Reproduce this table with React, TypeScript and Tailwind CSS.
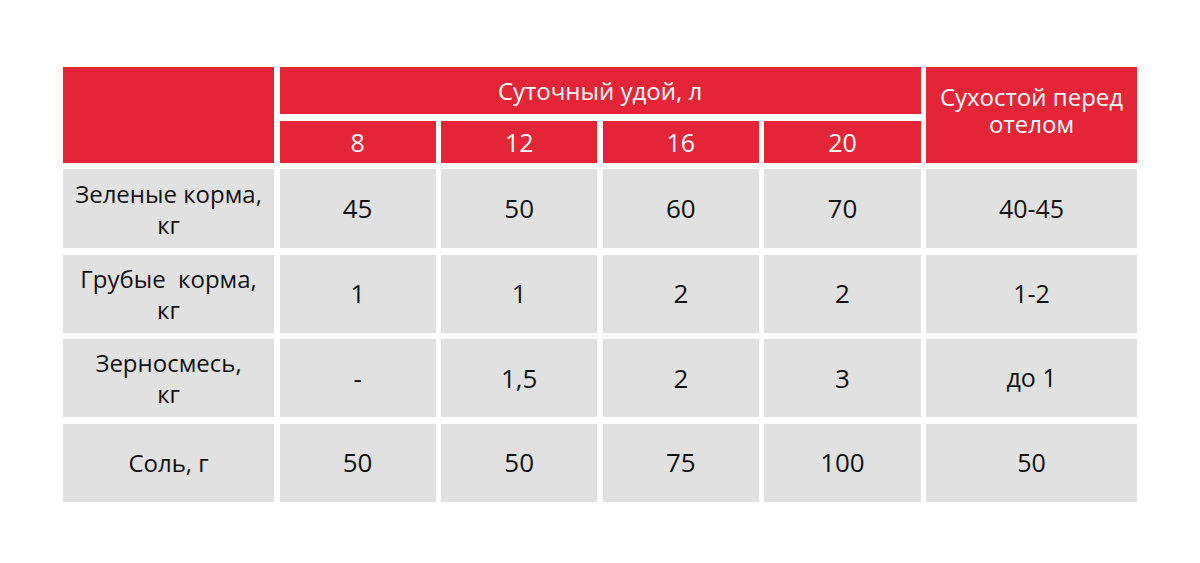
import React from "react";

const cols = ["8", "12", "16", "20"];

const rows: { label: React.ReactNode; values: string[]; dry: string }[] = [
  { label: <>Зеленые корма,<br />кг</>, values: ["45", "50", "60", "70"], dry: "40-45" },
  { label: <>Грубые&nbsp; корма,<br />кг</>, values: ["1", "1", "2", "2"], dry: "1-2" },
  { label: <>Зерносмесь,<br />кг</>, values: ["-", "1,5", "2", "3"], dry: "до 1" },
  { label: <>Соль, г</>, values: ["50", "50", "75", "100"], dry: "50" },
];

export default function App() {
  return (
    <div
      className="w-[1200px] h-[563px] bg-white pt-[67px] pl-[63px]"
      style={{ fontFamily: '"Open Sans", "Noto Sans", sans-serif' }}
    >
      <div className="grid w-[1074px] grid-cols-[211px_repeat(4,1fr)_211px] grid-rows-[47px_42px_79px_78px_78px_78px] gap-x-[5.5px] gap-y-[6.5px]">
        <div className="row-span-2 bg-[#e42537]" />
        <div className="col-span-4 flex items-center justify-center bg-[#e42537] text-[24px] text-white">
          Суточный удой, л
        </div>
        <div className="row-span-2 flex flex-col items-center bg-[#e42537] pt-[18px] text-center text-[24px] leading-[33px] text-white">
          <div className="leading-[24px]">Сухостой перед</div>
          <div className="mt-[3px] leading-[24px]">отелом</div>
        </div>
        {cols.map((c) => (
          <div
            key={c}
            className="flex items-center justify-center bg-[#e42537] pt-[2px] text-[25px] text-white"
          >
            {c}
          </div>
        ))}
        {rows.map((r, i) => (
          <React.Fragment key={i}>
            <div className="flex items-center justify-center bg-[#e1e1e1] text-center text-[24px] leading-[31px] text-[#111]">
              <div>{r.label}</div>
            </div>
            {r.values.map((v, j) => (
              <div
                key={j}
                className="flex items-center justify-center bg-[#e1e1e1] text-[26px] text-[#111]"
              >
                {v}
              </div>
            ))}
            <div className="flex items-center justify-center bg-[#e1e1e1] text-[25px] text-[#111]">
              {r.dry}
            </div>
          </React.Fragment>
        ))}
      </div>
    </div>
  );
}
